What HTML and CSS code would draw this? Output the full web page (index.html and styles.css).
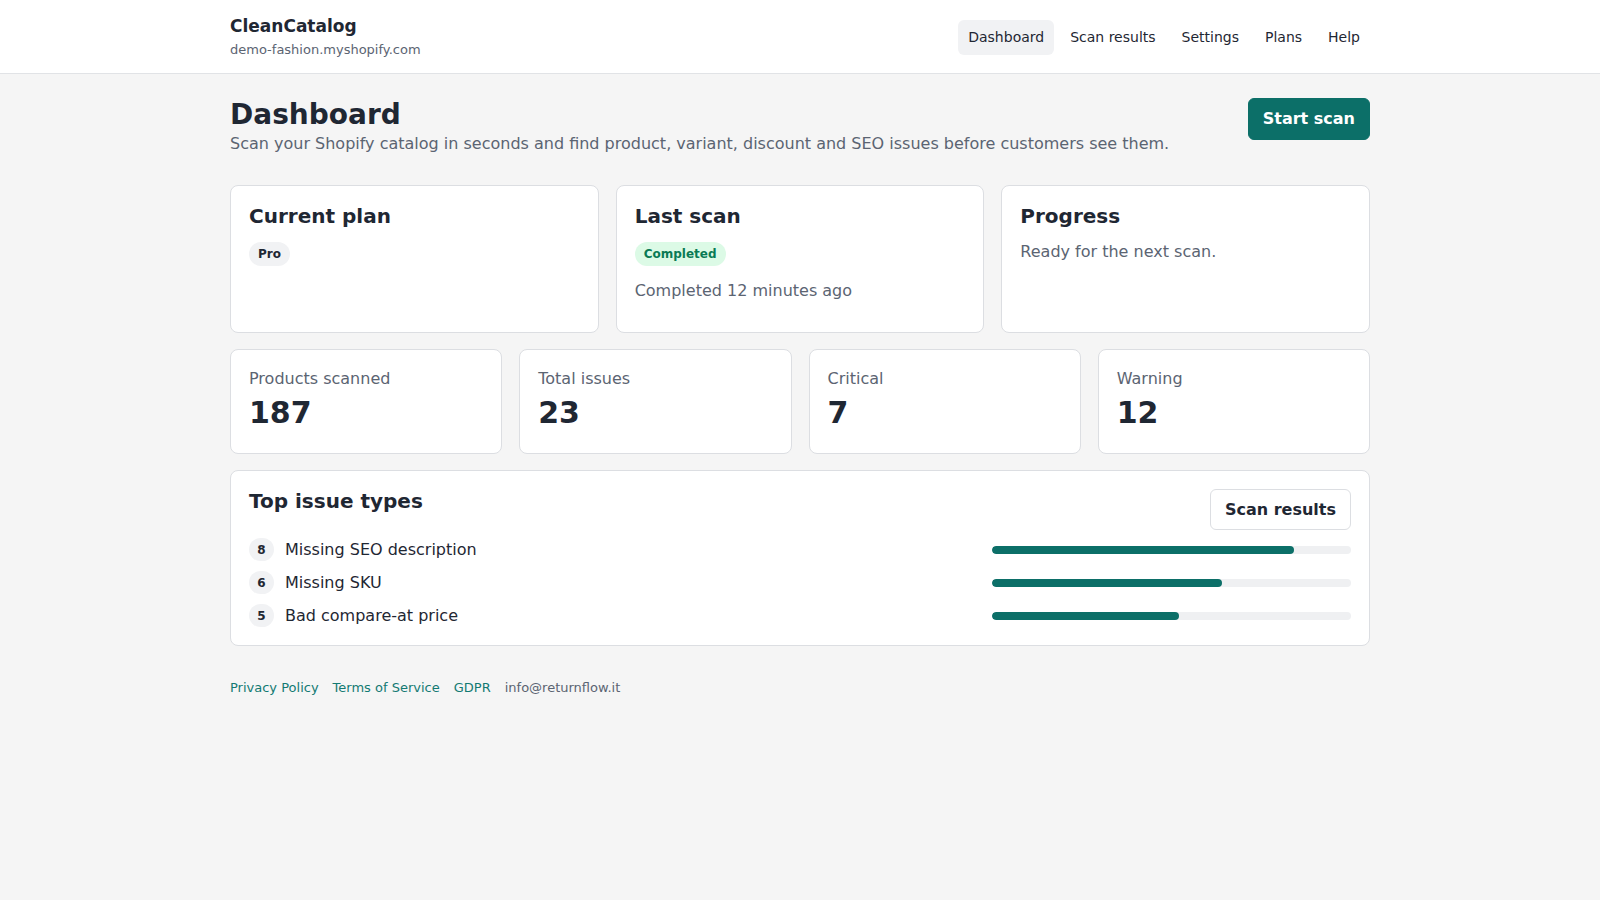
FILE: index.html
```html
<!DOCTYPE html>
<html lang="en">
<head>
    <meta charset="UTF-8">
    <meta name="viewport" content="width=device-width, initial-scale=1.0">
    <title>CleanCatalog - Dashboard</title>
    <link rel="stylesheet" href="styles.css">
</head>
<body>
    <header class="topbar">
        <div class="wrap topbar-inner">
            <div class="brand">
                <div class="brand-name">CleanCatalog</div>
                <div class="brand-shop">demo-fashion.myshopify.com</div>
            </div>
            <nav class="nav">
                <a class="nav-link active" href="#">Dashboard</a>
                <a class="nav-link" href="#">Scan results</a>
                <a class="nav-link" href="#">Settings</a>
                <a class="nav-link" href="#">Plans</a>
                <a class="nav-link" href="#">Help</a>
            </nav>
        </div>
    </header>

    <main class="wrap page">
        <div class="page-head">
            <div>
                <h1>Dashboard</h1>
                <p class="lead">Scan your Shopify catalog in seconds and find product, variant, discount and SEO issues before customers see them.</p>
            </div>
            <button class="btn btn-primary">Start scan</button>
        </div>

        <section class="grid grid-3">
            <div class="card">
                <h2 class="card-title">Current plan</h2>
                <span class="badge">Pro</span>
            </div>
            <div class="card">
                <h2 class="card-title">Last scan</h2>
                <span class="badge badge-success">Completed</span>
                <p class="muted">Completed 12 minutes ago</p>
            </div>
            <div class="card">
                <h2 class="card-title">Progress</h2>
                <p class="muted">Ready for the next scan.</p>
            </div>
        </section>

        <section class="grid grid-4">
            <div class="card stat">
                <div class="stat-label">Products scanned</div>
                <div class="stat-value">187</div>
            </div>
            <div class="card stat">
                <div class="stat-label">Total issues</div>
                <div class="stat-value">23</div>
            </div>
            <div class="card stat">
                <div class="stat-label">Critical</div>
                <div class="stat-value">7</div>
            </div>
            <div class="card stat">
                <div class="stat-label">Warning</div>
                <div class="stat-value">12</div>
            </div>
        </section>

        <section class="card issues">
            <div class="card-head">
                <h2 class="card-title">Top issue types</h2>
                <button class="btn btn-outline">Scan results</button>
            </div>
            <ul class="issue-list">
                <li class="issue">
                    <span class="count">8</span>
                    <span class="issue-name">Missing SEO description</span>
                    <div class="bar"><div class="bar-fill" style="width: 84%"></div></div>
                </li>
                <li class="issue">
                    <span class="count">6</span>
                    <span class="issue-name">Missing SKU</span>
                    <div class="bar"><div class="bar-fill" style="width: 64%"></div></div>
                </li>
                <li class="issue">
                    <span class="count">5</span>
                    <span class="issue-name">Bad compare-at price</span>
                    <div class="bar"><div class="bar-fill" style="width: 52%"></div></div>
                </li>
            </ul>
        </section>

        <footer class="footer">
            <a href="#">Privacy Policy</a>
            <a href="#">Terms of Service</a>
            <a href="#">GDPR</a>
            <span class="footer-mail">info@returnflow.it</span>
        </footer>
    </main>
</body>
</html>
```

FILE: styles.css
```css
body {
    margin: 0;
    font-family: "DejaVu Sans", Verdana, sans-serif;
    background-color: #f5f5f5;
    color: #1f2733;
}
.wrap {
    max-width: 1140px;
    margin: 0 auto;
}

/* top bar */
.topbar {
    background-color: #fff;
    border-bottom: 1px solid #e1e3e6;
}
.topbar-inner {
    display: flex;
    align-items: center;
    justify-content: space-between;
    padding: 16px 0;
}
.brand-name {
    font-size: 17px;
    font-weight: bold;
}
.brand-shop {
    margin-top: 6px;
    font-size: 13px;
    color: #5b6472;
}
.nav {
    display: flex;
    gap: 6px;
    margin-top: 2px;
}
.nav-link {
    padding: 9px 10px;
    font-size: 14px;
    line-height: 17px;
    color: #1f2733;
    text-decoration: none;
    border-radius: 6px;
}
.nav-link.active {
    background-color: #f1f2f4;
}

/* page */
.page {
    padding-top: 24px;
}
.page-head {
    display: flex;
    justify-content: space-between;
    align-items: flex-start;
    margin-bottom: 32px;
}
h1 {
    margin: 0;
    font-size: 28px;
    font-weight: bold;
}
.lead {
    margin: 3px 0 0;
    font-size: 16px;
    color: #5b6472;
}
.btn {
    font-family: inherit;
    font-size: 16px;
    font-weight: bold;
    border-radius: 6px;
    cursor: pointer;
}
.btn-primary {
    padding: 10px 14px;
    line-height: 20px;
    border: 1px solid #0c6f68;
    background-color: #0c6f68;
    color: #fff;
}
.btn-outline {
    padding: 10px 14px;
    border: 1px solid #dcdee2;
    background-color: #fff;
    color: #1f2733;
}

/* cards */
.grid {
    display: grid;
    gap: 17px;
    margin-bottom: 16px;
}
.grid-3 {
    grid-template-columns: repeat(3, 1fr);
}
.grid-4 {
    grid-template-columns: repeat(4, 1fr);
}
.card {
    background-color: #fff;
    border: 1px solid #dcdee2;
    border-radius: 8px;
    padding: 18px;
}
.card-title {
    margin: 0 0 14px;
    font-size: 20px;
    font-weight: bold;
}
.card .muted {
    margin: 15px 0 14px;
    font-size: 16px;
    color: #5b6472;
}
.card .card-title + .muted {
    margin-top: 1px;
}
.badge {
    display: inline-block;
    padding: 5px 9px;
    font-size: 12px;
    font-weight: bold;
    line-height: 14px;
    border-radius: 999px;
    background-color: #f1f2f4;
    color: #1f2733;
}
.badge-success {
    background-color: #dcfae6;
    color: #0a7a55;
}

/* stats */
.stat-label {
    margin-top: 1px;
    font-size: 16px;
    color: #5b6472;
}
.stat-value {
    margin: 7px 0 4px;
    font-size: 30px;
    font-weight: bold;
    line-height: 1.2;
}

/* top issues */
.card-head {
    display: flex;
    justify-content: space-between;
    align-items: flex-start;
}
.card-head .card-title {
    margin: 0;
}
.issue-list {
    list-style: none;
    margin: 8px 0 0;
    padding: 0;
    display: flex;
    flex-direction: column;
    gap: 10px;
}
.issue {
    display: flex;
    align-items: center;
}
.count {
    display: inline-flex;
    align-items: center;
    justify-content: center;
    min-width: 25px;
    height: 23px;
    box-sizing: border-box;
    padding: 0 8px;
    font-size: 12px;
    font-weight: bold;
    border-radius: 999px;
    background-color: #f1f2f4;
}
.issue-name {
    flex: 1;
    margin-left: 11px;
    font-size: 16px;
}
.bar {
    width: 359px;
    height: 8px;
    border-radius: 999px;
    background-color: #eff0f2;
    overflow: hidden;
}
.bar-fill {
    height: 100%;
    border-radius: 999px;
    background-color: #0c6f68;
}

/* footer */
.footer {
    display: flex;
    gap: 14px;
    margin-top: 34px;
    font-size: 13px;
}
.footer a {
    color: #137a73;
    text-decoration: none;
}
.footer-mail {
    color: #5b6472;
}
```
